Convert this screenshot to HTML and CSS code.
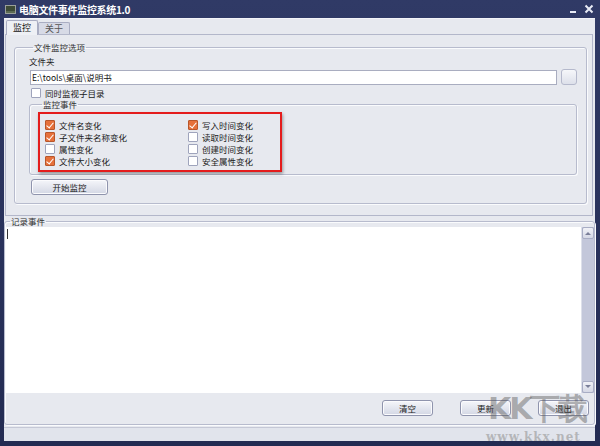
FILE: index.html
```html
<!DOCTYPE html>
<html>
<head>
<meta charset="utf-8">
<link rel="stylesheet" href="styles.css">
</head>
<body>
<div class="window">
  <div class="titlebar">
    <span class="appicon"></span>
    <span class="title">电脑文件事件监控系统1.0</span>
    <span class="spacer"></span>
    <span class="tbtn min"></span>
    <svg class="tbtn close" width="10" height="10" viewBox="0 0 10 10"><path d="M1.5 1.5 L8.5 8.5 M8.5 1.5 L1.5 8.5" stroke="#e8ebf5" stroke-width="2"/></svg>
  </div>
  <div class="client">
    <div class="tabs">
      <div class="tab active">监控</div>
      <div class="tab">关于</div>
    </div>
    <div class="tabpanel">
      <fieldset class="group g1">
        <legend>文件监控选项</legend>
        <div class="lbl">文件夹</div>
        <div class="pathrow">
          <div class="input">E:\tools\桌面\说明书</div>
          <div class="browse"></div>
        </div>
        <label class="cb sub"><span class="box"></span>同时监视子目录</label>
        <fieldset class="group g2">
          <legend>监控事件</legend>
          <div class="events">
            <div class="col">
              <label class="cb"><span class="box on"></span>文件名变化</label>
              <label class="cb"><span class="box on"></span>子文件夹名称变化</label>
              <label class="cb"><span class="box"></span>属性变化</label>
              <label class="cb"><span class="box on"></span>文件大小变化</label>
            </div>
            <div class="col">
              <label class="cb"><span class="box on"></span>写入时间变化</label>
              <label class="cb"><span class="box"></span>读取时间变化</label>
              <label class="cb"><span class="box"></span>创建时间变化</label>
              <label class="cb"><span class="box"></span>安全属性变化</label>
            </div>
          </div>
        </fieldset>
        <div class="btn start">开始监控</div>
      </fieldset>
    </div>
    <fieldset class="group log">
      <legend>记录事件</legend>
      <div class="memo">
        <div class="text"><span class="caret"></span></div>
        <div class="scroll">
          <div class="sbtn"><svg width="6" height="4" viewBox="0 0 6 4"><path d="M0 4 L3 1 L6 4Z" fill="#7a7f99"/></svg></div>
          <div class="track"></div>
          <div class="sbtn"><svg width="6" height="4" viewBox="0 0 6 4"><path d="M0 0 L3 3 L6 0Z" fill="#7a7f99"/></svg></div>
        </div>
      </div>
      <div class="btnrow">
        <div class="btn">清空</div>
        <div class="btn">更新</div>
        <div class="btn">退出</div>
      </div>
    </fieldset>
    <div class="status"></div>
  </div>
  <div class="wm-logo">KK下载</div>
  <div class="wm-url">www.kkx.net</div>
</div>
</body>
</html>
```
FILE: styles.css
```css
* { box-sizing: border-box; }
html, body { margin: 0; padding: 0; }
body {
  width: 600px; height: 446px; overflow: hidden;
  background: #252d55;
  font-family: "Noto Sans CJK SC", "DejaVu Sans", sans-serif;
  font-size: 8.5px; color: #1a1a1a;
}
.window {
  position: relative;
  width: 600px; height: 446px;
  display: flex; flex-direction: column;
  background: linear-gradient(#303a66, #232b52);
}
.titlebar {
  height: 18px; display: flex; align-items: center;
  padding: 0 6px 0 5px;
}
.appicon {
  width: 11px; height: 9px;
  background: #3d4a36;
  border: 1px solid #9aa09a;
  box-shadow: inset 0 -2px 0 #5c6b52;
}
.title {
  margin-left: 3px; color: #fff; font-weight: bold; font-size: 10px;
  letter-spacing: -0.3px;
}
.spacer { flex: 1; }
.tbtn.min { width: 6px; height: 2px; background: #e8ebf5; margin-top: 5px; margin-right: 8px; }
.tbtn.close { display: block; }
.client {
  flex: 1;
  margin: 0 5px 5px 4px;
  background: #e7e9ef;
  display: flex; flex-direction: column;
  border-top: 1px solid #f3f4f8;
}
.tabs { display: flex; height: 15px; align-items: flex-end; padding-left: 2px; }
.tab {
  height: 12px; padding: 0 6px; line-height: 11px;
  border: 1px solid #a9adc2; border-bottom: none;
  background: #d7dae6; color: #555;
  border-radius: 2px 2px 0 0;
  font-size: 9px;
}
.tab.active {
  height: 15px; line-height: 13px; background: #eef0f5; color: #111;
  position: relative; top: 1px; z-index: 1;
}
.tabpanel {
  height: 182px;
  margin: 0 2px 0 1px;
  border: 1px solid #b3b7ca;
  background: #e7e9ef;
  padding: 7px 5px 0 8px;
}
fieldset.group {
  margin: 0; border: 1px solid #b7bbcd; border-radius: 3px;
  box-shadow: 1px 1px 0 #fafbfd inset, 1px 1px 0 #fafbfd;
}
fieldset.group legend {
  padding: 0 1px; margin-left: 4px; color: #333; font-size: 8.5px; line-height: 10px;
}
.g1 { height: 162px; padding: 0 9px 0 14px; }
.lbl { margin-top: 4px; height: 13px; line-height: 10px; }
.pathrow { display: flex; align-items: center; gap: 4px; margin-left: 1px; }
.input {
  flex: 1; height: 15px; background: #fff; border: 1px solid #a9adc0;
  line-height: 13px; padding-left: 1px; font-size: 8.5px; color: #111;
}
.browse {
  width: 16px; height: 16px; border: 1px solid #b5b9cc; border-radius: 3px;
  background: linear-gradient(#f6f7fa, #dde0ea);
}
.cb { display: flex; align-items: center; height: 12px; line-height: 10px; white-space: nowrap; }
.cb .box {
  width: 10px; height: 10px; background: #fff; border: 1px solid #9fa4bc;
  margin-right: 4px; border-radius: 1px; position: relative;
}
.cb .box.on { background: #e6703a; border-color: #b8562a; }
.cb .box.on::after {
  content: ""; position: absolute; left: 2px; top: 0px; width: 3px; height: 6px;
  border: solid #fff; border-width: 0 1.5px 1.5px 0; transform: rotate(40deg);
}
.cb.sub { margin: 2px 0 0 2px; }
.g2 { height: 76px; margin: 4px 0 0 3px; padding: 0 0 0 8px; }
.events {
  width: 244px; height: 60px;
  border: 2px solid #e41c1c;
  box-shadow: 1px 2px 3px rgba(0,0,0,0.35);
  display: flex; padding: 5px 0 0 5px; margin-top: 3px;
}
.col { display: flex; flex-direction: column; }
.col:first-child { width: 143px; }
.btn {
  width: 51px; height: 16px; border: 1px solid #8f94ad; border-radius: 3px;
  background: linear-gradient(#f5f6fa, #d3d7e4);
  text-align: center; line-height: 14px; font-size: 8.5px;
  box-shadow: inset 0 0 0 1px #fbfbfd;
}
.btn.start { width: 77px; margin: 4px 0 0 2px; }
.log {
  margin: 1px 2px 0 3px; flex: 1; padding: 0 0 0 1px;
  display: flex; flex-direction: column;
}
.memo { display: flex; height: 166px; margin-top: 1px; }
.text { flex: 1; background: #fff; padding: 2px 0 0 1px; }
.caret { display: block; width: 1px; height: 10px; background: #333; }
.scroll {
  width: 13px; background: #c3c7da; display: flex; flex-direction: column;
  border-left: 1px solid #dde0ea;
}
.sbtn {
  height: 12px; background: linear-gradient(#f1f2f7, #d5d8e5);
  border: 1px solid #a8adc4; border-radius: 2px;
  display: flex; align-items: center; justify-content: center;
}
.track { flex: 1; }
.btnrow { display: flex; justify-content: flex-end; gap: 27px; padding: 7px 5px 0 0; }
.status {
  height: 14px; margin: 2px 0 0 0; border-top: 1px solid #c5c8d6;
  background: #e1e4ec;
}
.wm-logo {
  position: absolute; left: 488px; top: 392px;
  font: bold 30px "DejaVu Sans", sans-serif; color: rgba(90,90,90,0.45);
  letter-spacing: -2px; line-height: 34px;
}
.wm-url {
  position: absolute; left: 486px; top: 430px;
  font: bold 12px "DejaVu Serif", serif; color: rgba(150,150,150,0.6);
  letter-spacing: 1px;
}
```
